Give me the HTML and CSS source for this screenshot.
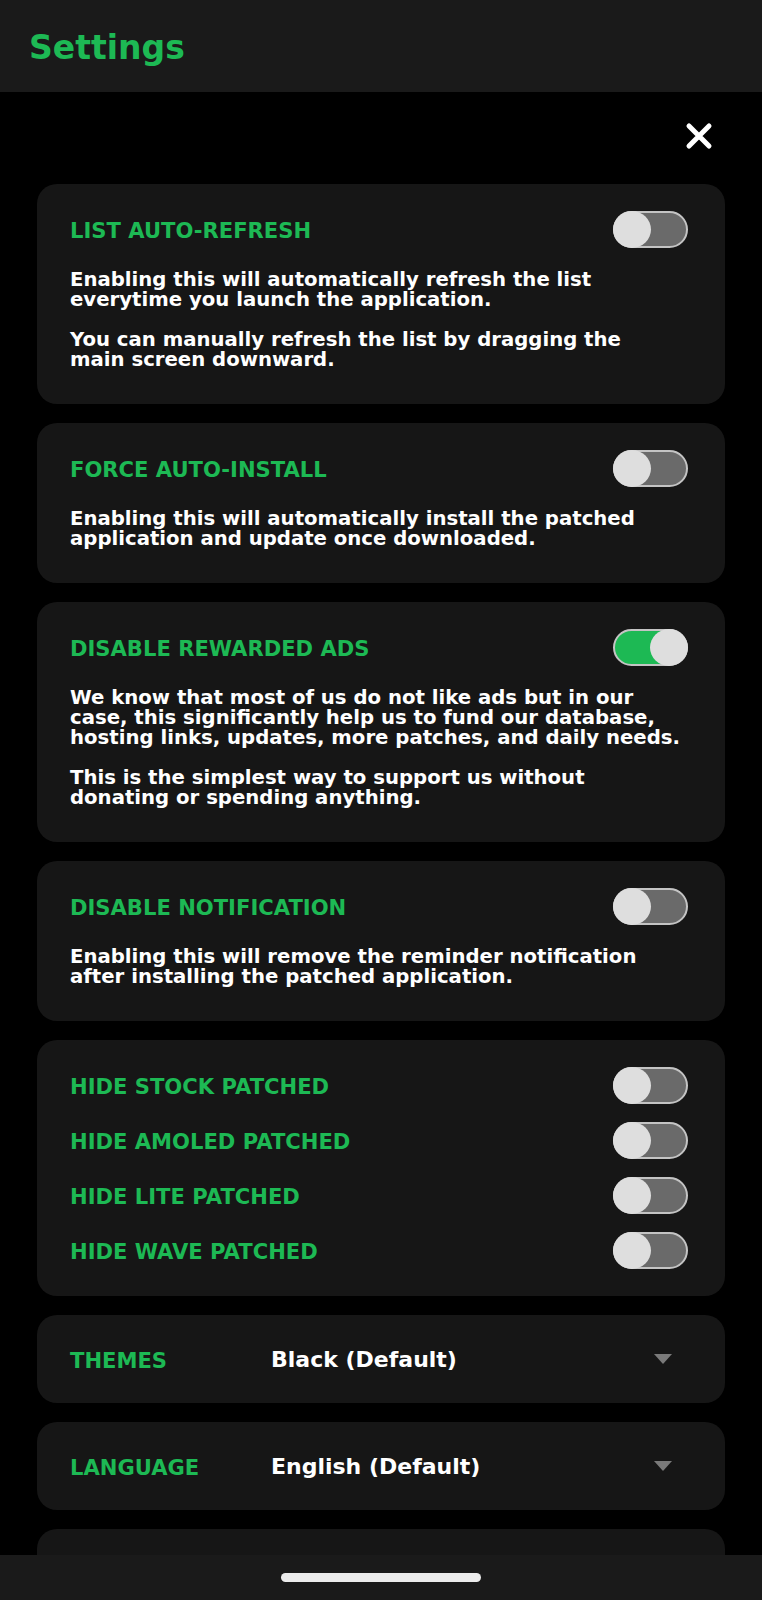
FILE: index.html
```html
<!DOCTYPE html>
<html lang="en">
<head>
<meta charset="utf-8">
<title>Settings</title>
<link rel="stylesheet" href="styles.css">
</head>
<body>
<header class="topbar">
  <h1 class="title">Settings</h1>
</header>
<main class="content">
  <div class="close-row">
    <button class="close" aria-label="Close">
      <svg width="28" height="28" viewBox="0 0 28 28"><path d="M4 4 L24 24 M24 4 L4 24" stroke="#fff" stroke-width="5" stroke-linecap="round" fill="none"/></svg>
    </button>
  </div>

  <section class="card">
    <div class="card-head">
      <h2 class="label">LIST AUTO-REFRESH</h2>
      <span class="toggle"><span class="knob"></span></span>
    </div>
    <p class="desc">Enabling this will automatically refresh the list<br>everytime you launch the application.</p>
    <p class="desc">You can manually refresh the list by dragging the<br>main screen downward.</p>
  </section>

  <section class="card">
    <div class="card-head">
      <h2 class="label">FORCE AUTO-INSTALL</h2>
      <span class="toggle"><span class="knob"></span></span>
    </div>
    <p class="desc">Enabling this will automatically install the patched<br>application and update once downloaded.</p>
  </section>

  <section class="card">
    <div class="card-head">
      <h2 class="label">DISABLE REWARDED ADS</h2>
      <span class="toggle on"><span class="knob"></span></span>
    </div>
    <p class="desc">We know that most of us do not like ads but in our<br>case, this significantly help us to fund our database,<br>hosting links, updates, more patches, and daily needs.</p>
    <p class="desc">This is the simplest way to support us without<br>donating or spending anything.</p>
  </section>

  <section class="card">
    <div class="card-head">
      <h2 class="label">DISABLE NOTIFICATION</h2>
      <span class="toggle"><span class="knob"></span></span>
    </div>
    <p class="desc">Enabling this will remove the reminder notification<br>after installing the patched application.</p>
  </section>

  <section class="card card-list">
    <div class="card-head">
      <h2 class="label">HIDE STOCK PATCHED</h2>
      <span class="toggle"><span class="knob"></span></span>
    </div>
    <div class="card-head">
      <h2 class="label">HIDE AMOLED PATCHED</h2>
      <span class="toggle"><span class="knob"></span></span>
    </div>
    <div class="card-head">
      <h2 class="label">HIDE LITE PATCHED</h2>
      <span class="toggle"><span class="knob"></span></span>
    </div>
    <div class="card-head">
      <h2 class="label">HIDE WAVE PATCHED</h2>
      <span class="toggle"><span class="knob"></span></span>
    </div>
  </section>

  <section class="card card-select">
    <h2 class="label">THEMES</h2>
    <span class="value">Black (Default)</span>
    <span class="caret"></span>
  </section>

  <section class="card card-select">
    <h2 class="label">LANGUAGE</h2>
    <span class="value">English (Default)</span>
    <span class="caret"></span>
  </section>

  <section class="card card-select">
    <h2 class="label">ABOUT</h2>
    <span class="value"></span>
    <span class="caret"></span>
  </section>
</main>
<nav class="navbar"><span class="pill"></span></nav>
</body>
</html>
```

FILE: styles.css
```css
* { box-sizing: border-box; }

html, body {
  margin: 0;
  padding: 0;
  background: #000;
}

body {
  font-family: "DejaVu Sans", "Liberation Sans", sans-serif;
  font-weight: 700;
  color: #fff;
}

.topbar {
  height: 92px;
  background: #1a1a1a;
  padding: 29px 0 0 29px;
}

.title {
  margin: 0;
  font-size: 33px;
  line-height: 38px;
  font-weight: 700;
  color: #1db954;
}

.content {
  display: flex;
  flex-direction: column;
  gap: 19px;
  padding: 0 37px 60px;
}

.close-row {
  display: flex;
  justify-content: flex-end;
  padding: 30px 12px 15px 0;
}

.close {
  width: 28px;
  height: 28px;
  padding: 0;
  border: 0;
  background: transparent;
  display: block;
}

.close svg { display: block; }

.card {
  background: #161616;
  border-radius: 20px;
  padding: 27px 37px 34px 33px;
}

.card-head {
  display: flex;
  align-items: center;
  justify-content: space-between;
  height: 37px;
}

.label {
  margin: 0;
  padding-top: 3px;
  font-size: 21.1px;
  line-height: 24px;
  font-weight: 700;
  color: #1db954;
}

.desc {
  margin: 20px 0 0;
  font-size: 19.7px;
  line-height: 20px;
  white-space: nowrap;
  color: #fff;
}

.card-head + .desc { margin-top: 22px; }

.toggle {
  position: relative;
  width: 75px;
  height: 37px;
  border-radius: 19px;
  background: #6a6a6a;
  border: 2px solid #c4c4c4;
  flex: none;
}

.toggle .knob {
  position: absolute;
  top: -2px;
  left: -2px;
  width: 38px;
  height: 37px;
  border-radius: 50%;
  background: #dedede;
}

.toggle.on { background: #1db954; }
.toggle.on .knob { left: auto; right: -2px; }

.card-list {
  display: flex;
  flex-direction: column;
  gap: 18px;
  padding-top: 27px;
  padding-bottom: 27px;
}

.card-select {
  display: grid;
  grid-template-columns: 201px 1fr auto;
  align-items: center;
  height: 88px;
  padding: 0 53px 0 33px;
}

.value {
  font-size: 22px;
  line-height: 26px;
  padding-top: 2px;
  color: #fff;
}

.caret {
  width: 0;
  height: 0;
  border-left: 9.5px solid transparent;
  border-right: 9.5px solid transparent;
  border-top: 10px solid #7a7a7a;
}

.navbar {
  position: fixed;
  left: 0;
  right: 0;
  bottom: 0;
  height: 45px;
  background: #1a1a1a;
  display: flex;
  justify-content: center;
  padding-top: 18px;
}

.pill {
  width: 200px;
  height: 9px;
  border-radius: 5px;
  background: #ececec;
}
```
